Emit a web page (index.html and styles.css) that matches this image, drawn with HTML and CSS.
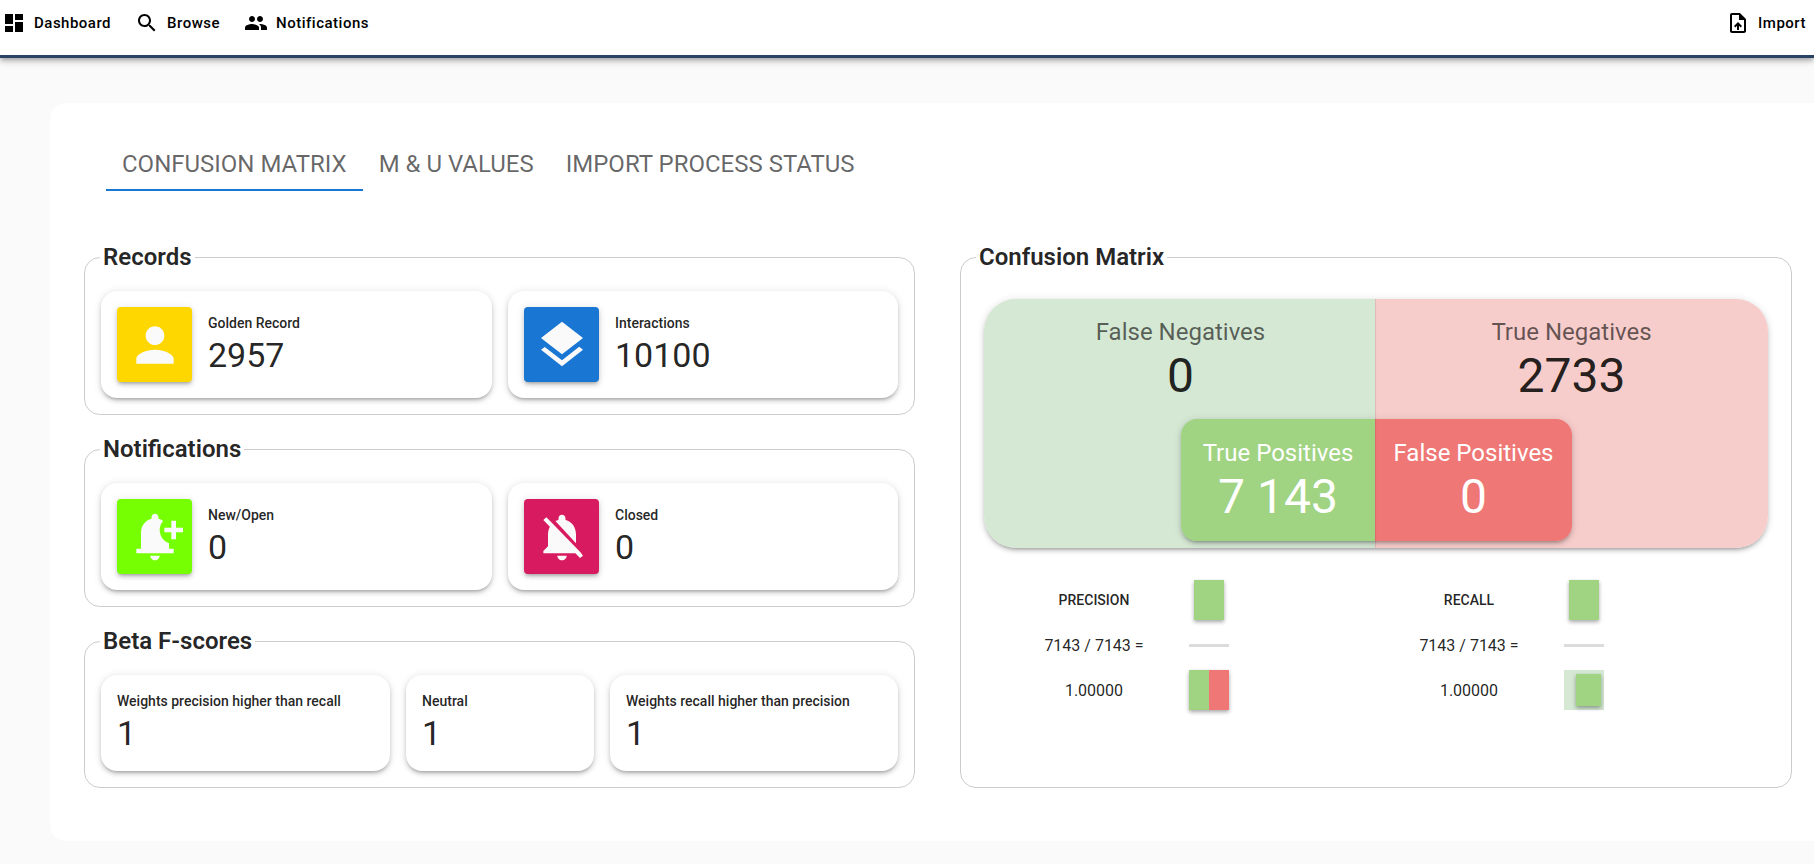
FILE: index.html
```html
<!DOCTYPE html>
<html lang="en">
<head>
<meta charset="UTF-8">
<meta name="viewport" content="width=device-width, initial-scale=1.0">
<title>Dashboard</title>
<link rel="stylesheet" href="styles.css">
</head>
<body>

<nav class="navbar">
    <a class="nav-btn"><svg viewBox="0 0 24 24"><path d="M3 13h8V3H3v10zm0 8h8v-6H3v6zm10 0h8V11h-8v10zm0-18v6h8V3h-8z"/></svg>Dashboard</a>
    <a class="nav-btn"><svg viewBox="0 0 24 24"><path d="M15.5 14h-.79l-.28-.27C15.41 12.59 16 11.11 16 9.5 16 5.91 13.09 3 9.5 3S3 5.91 3 9.5 5.91 16 9.5 16c1.61 0 3.09-.59 4.23-1.57l.27.28v.79l5 4.99L20.49 19l-4.99-5zm-6 0C7.01 14 5 11.99 5 9.5S7.01 5 9.5 5 14 7.01 14 9.5 11.99 14 9.5 14z"/></svg>Browse</a>
    <a class="nav-btn"><svg viewBox="0 0 24 24"><path d="M16 11c1.66 0 2.99-1.34 2.99-3S17.66 5 16 5c-1.66 0-3 1.34-3 3s1.34 3 3 3zm-8 0c1.66 0 2.99-1.34 2.99-3S9.66 5 8 5C6.34 5 5 6.34 5 8s1.34 3 3 3zm0 2c-2.33 0-7 1.17-7 3.5V19h14v-2.5c0-2.33-4.67-3.5-7-3.5zm8 0c-.29 0-.62.02-.97.05 1.16.84 1.97 1.97 1.97 3.45V19h6v-2.5c0-2.33-4.67-3.5-7-3.5z"/></svg>Notifications</a>
    <a class="nav-btn nav-right"><svg viewBox="0 0 24 24"><path d="M14 2H6c-1.1 0-1.99.9-1.99 2L4 20c0 1.1.89 2 1.99 2H18c1.1 0 2-.9 2-2V8l-6-6zm4 18H6V4h7v5h5v11zM8 15.01l1.41 1.41L11 14.84V19h2v-4.16l1.59 1.59L16 15.01 12.01 11 8 15.01z"/></svg>Import</a>
</nav>

<main class="page-card">
    <div class="tabs">
        <div class="tab active">Confusion Matrix</div>
        <div class="tab">M &amp; U Values</div>
        <div class="tab">Import Process Status</div>
    </div>

    <div class="columns">
        <div class="left-col">
            <fieldset class="group">
                <legend>Records</legend>
                <div class="row">
                    <div class="stat">
                        <div class="stat-icon yellow"><svg viewBox="0 0 24 24"><path d="M12 12c2.21 0 4-1.79 4-4s-1.79-4-4-4-4 1.79-4 4 1.79 4 4 4zm0 2c-2.67 0-8 1.34-8 4v2h16v-2c0-2.66-5.33-4-8-4z"/></svg></div>
                        <div class="stat-text">
                            <div class="stat-label">Golden Record</div>
                            <div class="stat-value">2957</div>
                        </div>
                    </div>
                    <div class="stat">
                        <div class="stat-icon blue"><svg viewBox="0 0 24 24"><path d="M11.99 18.54l-7.37-5.73L3 14.07l9 7 9-7-1.63-1.27-7.38 5.74zM12 16l7.36-5.73L21 9l-9-7-9 7 1.63 1.27L12 16z"/></svg></div>
                        <div class="stat-text">
                            <div class="stat-label">Interactions</div>
                            <div class="stat-value">10100</div>
                        </div>
                    </div>
                </div>
            </fieldset>

            <fieldset class="group">
                <legend>Notifications</legend>
                <div class="row">
                    <div class="stat">
                        <div class="stat-icon green"><svg viewBox="0 0 24 24"><path d="M10 20h4c0 1.1-.9 2-2 2s-2-.9-2-2zM14 9c0 2.61 1.67 4.83 4 5.66V17h2v2H4v-2h2v-7c0-2.79 1.91-5.14 4.5-5.8v-.7C10.5 2.67 11.17 2 12 2s1.5.67 1.5 1.5v.7c.71.18 1.36.49 1.95.9C14.54 6.14 14 7.51 14 9zM24 8h-3V5h-2v3h-3v2h3v3h2v-3h3V8z"/></svg></div>
                        <div class="stat-text">
                            <div class="stat-label">New/Open</div>
                            <div class="stat-value">0</div>
                        </div>
                    </div>
                    <div class="stat">
                        <div class="stat-icon pink"><svg viewBox="0 0 24 24"><path d="M20 18.69L7.84 6.14 5.27 3.49 4 4.76l2.8 2.8v.01c-.52.99-.8 2.16-.8 3.42v5l-2 2v1h13.73l2 2L21 20.01l-1-1.32zM12 22c1.11 0 2-.89 2-2h-4c0 1.11.89 2 2 2zm6-7.32V11c0-3.08-1.64-5.64-4.5-6.32V4c0-.83-.67-1.5-1.5-1.5s-1.5.67-1.5 1.5v.68c-.15.03-.29.08-.42.12-.1.03-.2.07-.3.11h-.01c-.2.08-.4.17-.59.27-.01 0-.01 0-.02.01L18 14.68z"/></svg></div>
                        <div class="stat-text">
                            <div class="stat-label">Closed</div>
                            <div class="stat-value">0</div>
                        </div>
                    </div>
                </div>
            </fieldset>

            <fieldset class="group">
                <legend>Beta F-scores</legend>
                <div class="row beta-row">
                    <div class="stat">
                        <div>
                            <div class="stat-label">Weights precision higher than recall</div>
                            <div class="stat-value">1</div>
                        </div>
                    </div>
                    <div class="stat">
                        <div>
                            <div class="stat-label">Neutral</div>
                            <div class="stat-value">1</div>
                        </div>
                    </div>
                    <div class="stat">
                        <div>
                            <div class="stat-label">Weights recall higher than precision</div>
                            <div class="stat-value">1</div>
                        </div>
                    </div>
                </div>
            </fieldset>
        </div>

        <fieldset class="group matrix-group">
            <legend>Confusion Matrix</legend>
            <div class="matrix">
                <div class="half half-green">
                    <div class="cell-label">False Negatives</div>
                    <div class="cell-value">0</div>
                </div>
                <div class="half half-red">
                    <div class="cell-label">True Negatives</div>
                    <div class="cell-value">2733</div>
                </div>
                <div class="inner">
                    <div class="inner-cell inner-green">
                        <div class="cell-label">True Positives</div>
                        <div class="cell-value">7 143</div>
                    </div>
                    <div class="inner-cell inner-red">
                        <div class="cell-label">False Positives</div>
                        <div class="cell-value">0</div>
                    </div>
                </div>
            </div>

            <div class="metrics">
                <div class="metric">
                    <div class="metric-title">PRECISION</div>
                    <div class="shape"><div class="swatch"></div></div>
                    <div class="metric-text">7143 / 7143 =</div>
                    <div class="shape"><div class="divider"></div></div>
                    <div class="metric-text">1.00000</div>
                    <div class="shape"><div class="split"><div class="split-green"></div><div class="split-red"></div></div></div>
                </div>
                <div class="metric">
                    <div class="metric-title">RECALL</div>
                    <div class="shape"><div class="swatch"></div></div>
                    <div class="metric-text">7143 / 7143 =</div>
                    <div class="shape"><div class="divider"></div></div>
                    <div class="metric-text">1.00000</div>
                    <div class="shape"><div class="nested"><div class="nested-box"></div></div></div>
                </div>
            </div>
        </fieldset>
    </div>
</main>

</body>
</html>
```

FILE: styles.css
```css
html, body {
    height: 100%;
}

body {
    font-family: Roboto, "Liberation Sans", sans-serif;
    margin: 0;
    padding: 0;
    background: #fafafa;
    color: rgba(0, 0, 0, 0.87);
    overflow: hidden;
}

/* top bar */
.navbar {
    display: flex;
    align-items: flex-start;
    gap: 24px;
    height: 44px;
    padding: 11px 8px 0 2px;
    background: #fff;
    border-bottom: 3px solid #2a4365;
    box-shadow: 0 2px 4px -1px rgba(0,0,0,0.2), 0 4px 5px 0 rgba(0,0,0,0.14), 0 1px 10px 0 rgba(0,0,0,0.12);
    margin-bottom: 45px;
}

.nav-btn {
    display: flex;
    align-items: center;
    gap: 8px;
    font-size: 15px;
    font-weight: 500;
    letter-spacing: 0.5px;
    color: #000;
}

.nav-btn svg {
    width: 24px;
    height: 24px;
    fill: #000;
}

.nav-right {
    margin-left: auto;
}

/* main white card */
.page-card {
    margin-left: 50px;
    padding: 40px 0 53px 34px;
    background: #fff;
    border-radius: 16px 0 0 16px;
}

.tabs {
    display: flex;
    margin-left: 22px;
}

.tab {
    height: 48px;
    box-sizing: border-box;
    padding: 0 16px;
    line-height: 42px;
    font-size: 24px;
    text-transform: uppercase;
    color: rgba(0, 0, 0, 0.6);
}

.tab.active {
    border-bottom: 2px solid #1976d2;
}

.columns {
    display: grid;
    grid-template-columns: 831px 832px;
    column-gap: 45px;
    margin-top: 50px;
}

.left-col {
    display: flex;
    flex-direction: column;
    gap: 18px;
}

/* fieldset boxes */
.group {
    margin: 0;
    min-width: 0;
    padding: 18px 16px 16px;
    border: 1px solid #ccc;
    border-radius: 16px;
}

.group legend {
    margin-left: -1px;
    padding: 0 3px;
    font-size: 24px;
    font-weight: 600;
    line-height: 32px;
}

.row {
    display: grid;
    grid-template-columns: 391px 390px;
    gap: 16px;
}

.beta-row {
    grid-template-columns: 289px 188px 288px;
}

.beta-row .stat {
    padding-top: 15px;
    padding-bottom: 17px;
}

.stat {
    display: flex;
    align-items: center;
    gap: 16px;
    padding: 16px;
    background: #fff;
    border-radius: 16px;
    box-shadow: 0 3px 3px -2px rgba(0,0,0,0.2), 0 3px 4px 0 rgba(0,0,0,0.14), 0 1px 8px 0 rgba(0,0,0,0.12);
}

.stat-text {
    padding-bottom: 2px;
}

.stat-icon {
    display: flex;
    align-items: center;
    justify-content: center;
    width: 75px;
    height: 75px;
    flex: none;
    border-radius: 4px;
    box-shadow: 0 3px 3px -2px rgba(0,0,0,0.2), 0 3px 4px 0 rgba(0,0,0,0.14), 0 1px 8px 0 rgba(0,0,0,0.12);
}

.stat-icon svg {
    width: 56px;
    height: 56px;
    fill: #fafafa;
}

.yellow { background: #ffd700; }
.blue { background: #1976d2; }
.green { background: #76ff03; }
.pink { background: #d81b60; }

.stat-label {
    font-size: 14px;
    font-weight: 500;
    line-height: 22px;
}

.stat-value {
    font-size: 34px;
    line-height: 42px;
}

/* confusion matrix */
.matrix-group {
    padding-left: 15px;
    padding-right: 15px;
}

.matrix-group legend {
    margin-left: 0;
}

.matrix {
    position: relative;
    display: grid;
    grid-template-columns: 391px 393px;
    height: 249px;
    margin: 8px 8px 0;
    border-radius: 32px;
    box-shadow: 0 3px 3px -2px rgba(0,0,0,0.2), 0 3px 4px 0 rgba(0,0,0,0.14), 0 1px 8px 0 rgba(0,0,0,0.12);
}

.half {
    padding-top: 17px;
    text-align: center;
}

.half-green {
    position: relative;
    z-index: 1;
    padding-left: 2px;
    background: #d5e8d4;
    border-radius: 32px 0 0 32px;
    box-shadow: 1px 0 1px rgba(0,0,0,0.1);
}

.half-red {
    background: #f7cdcb;
    border-radius: 0 32px 32px 0;
}

.cell-label {
    font-size: 24px;
    line-height: 32px;
    color: rgba(0, 0, 0, 0.6);
}

.cell-value {
    font-size: 48px;
    line-height: 56px;
}

/* sits over the two halves */
.inner {
    position: absolute;
    z-index: 2;
    left: 197px;
    top: 120px;
    display: grid;
    grid-template-columns: 194px 197px;
    height: 122px;
    border-radius: 16px;
    box-shadow: 0 3px 3px -2px rgba(0,0,0,0.2), 0 3px 4px 0 rgba(0,0,0,0.14), 0 1px 8px 0 rgba(0,0,0,0.12);
}

.inner-cell {
    padding-top: 18px;
    text-align: center;
}

.inner-cell .cell-label,
.inner-cell .cell-value {
    color: #fff;
}

.inner-green {
    position: relative;
    z-index: 1;
    background: #a0d382;
    border-radius: 16px 0 0 16px;
    box-shadow: 1px 0 1px rgba(0,0,0,0.1);
}

.inner-red {
    background: #ef7775;
    border-radius: 0 16px 16px 0;
}

/* precision and recall */
.metrics {
    display: grid;
    grid-template-columns: 375px 375px;
    margin: 32px 0 0 23px;
}

.metric {
    display: grid;
    grid-template-columns: 190px 40px;
    grid-template-rows: 40px 50px 40px;
    align-items: center;
}

.metric-title {
    font-size: 14px;
    font-weight: 500;
    text-align: center;
}

.metric-text {
    font-size: 16px;
    text-align: center;
}

.shape {
    display: flex;
    justify-content: center;
}

.swatch {
    width: 30px;
    height: 40px;
    background: #a0d382;
    box-shadow: 0 2px 4px rgba(0,0,0,0.35);
}

.divider {
    width: 40px;
    height: 3px;
    background: #dcdcdc;
}

.split {
    display: flex;
    width: 40px;
    height: 40px;
    box-shadow: 0 2px 4px rgba(0,0,0,0.35);
}

.split-green {
    flex: 1;
    background: #a0d382;
}

.split-red {
    flex: 1;
    background: #ef7775;
}

.nested {
    display: flex;
    align-items: center;
    justify-content: flex-end;
    width: 40px;
    height: 40px;
    padding-right: 3px;
    box-sizing: border-box;
    background: #d5e8d4;
}

.nested-box {
    width: 25px;
    height: 32px;
    background: #a0d382;
    box-shadow: 0 2px 4px rgba(0,0,0,0.35);
}
```
